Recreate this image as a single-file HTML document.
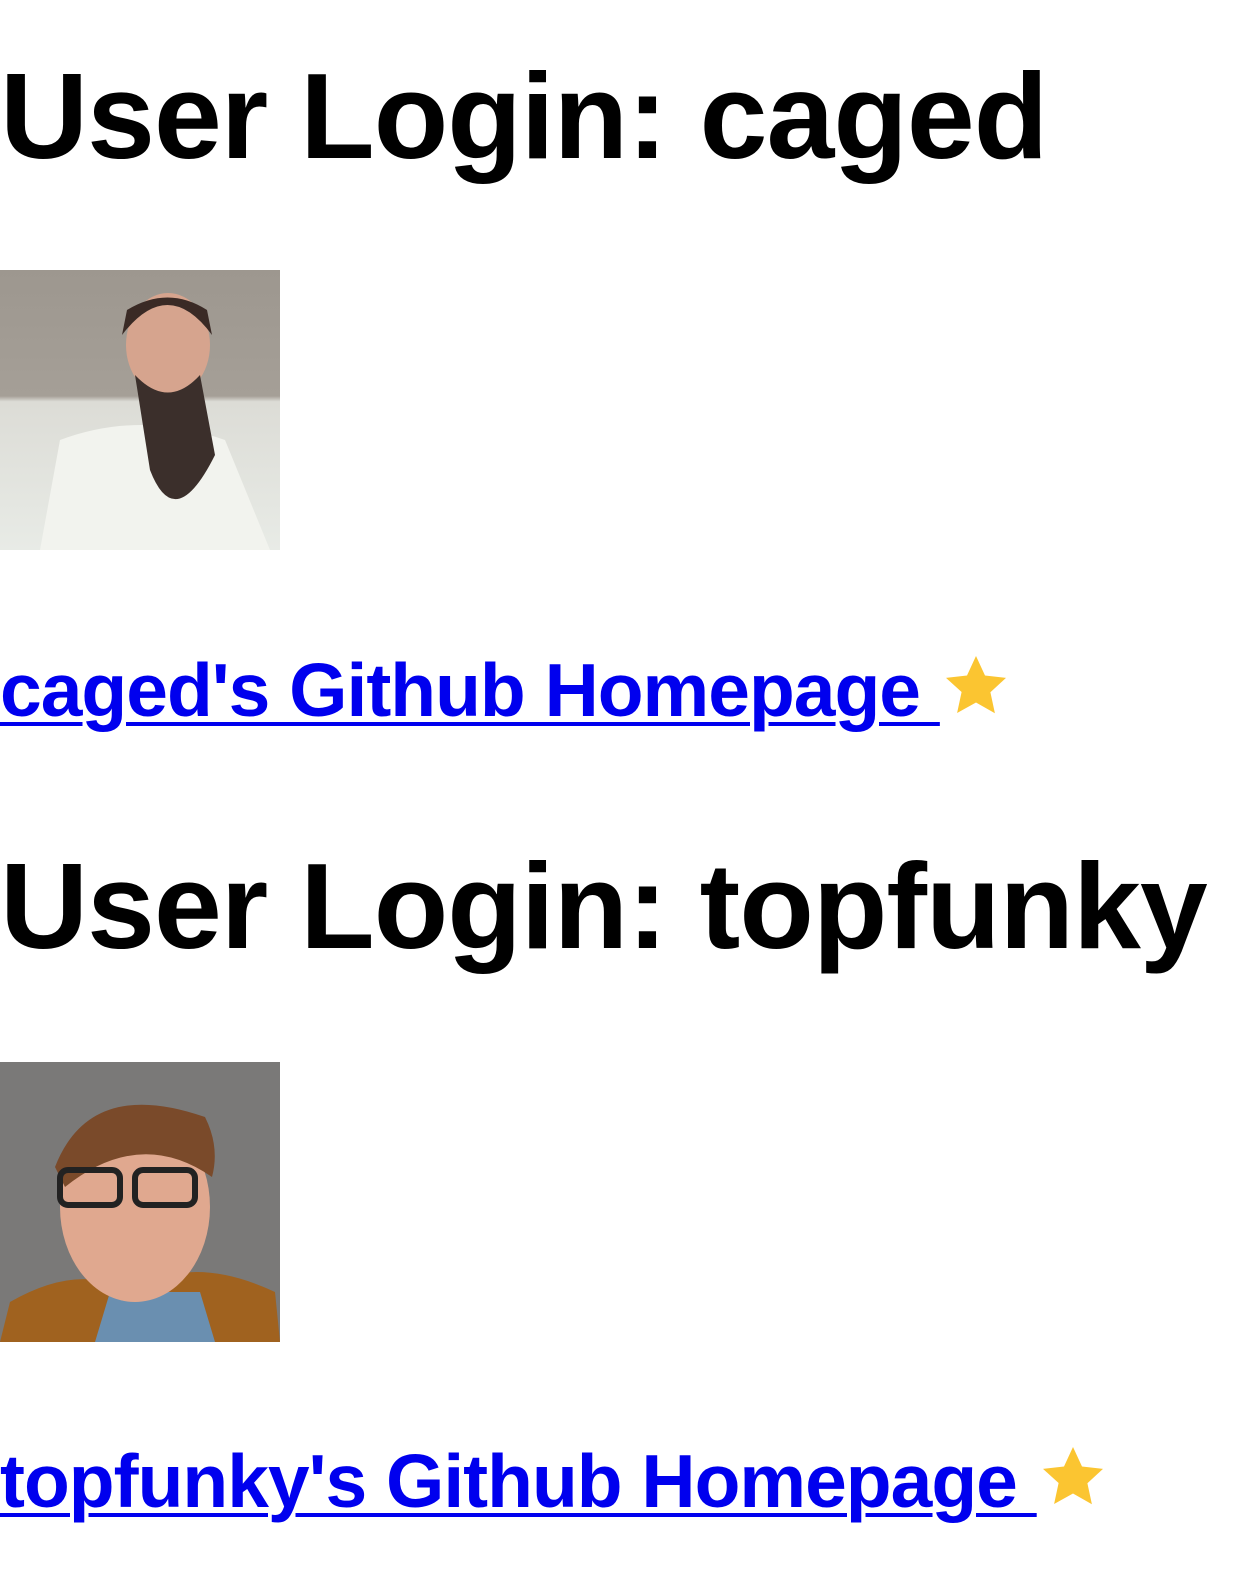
<!DOCTYPE html>
<html><head><meta charset="utf-8"><style>
html,body{margin:0;padding:0;background:#fff;width:1240px;height:1596px;overflow:hidden;position:relative}
.h{position:absolute;left:0;font-family:"Liberation Sans",sans-serif;font-weight:bold;line-height:1;white-space:nowrap;color:#000}
.h1{font-size:122px;letter-spacing:-1px}
.a{font-size:75px;color:#0000ee;text-decoration:underline;text-decoration-thickness:4px;text-underline-offset:6px;letter-spacing:-1px}
.img{position:absolute;left:0;width:280px;height:280px;overflow:hidden}
</style></head><body>
<div class="h h1" style="top:55px">User Login: caged</div>
<div class="img" style="top:270px;background:linear-gradient(#9d978f 0,#a59f97 45%,#dcdcd6 47%,#e8ebe6 100%)">
<svg width="280" height="280"><path d="M40 280 L60 170 Q140 140 225 170 L270 280Z" fill="#f2f3ee"/><ellipse cx="168" cy="75" rx="42" ry="52" fill="#d6a48e"/><path d="M122 65 Q168 5 212 65 L207 40 Q168 15 127 40Z" fill="#3a2a25"/><path d="M135 105 Q168 140 200 105 L215 185 Q175 265 150 200 Z" fill="#3b2f2b"/></svg></div>
<div class="h a" style="top:650px">caged's Github Homepage <svg width="72" height="72" viewBox="0 0 24 24" style="vertical-align:-6px"><path d="M12 2l3 6.5 7 .8-5.2 4.8 1.5 7L12 17.5 5.7 21l1.5-7L2 9.3l7-.8z" fill="#fbc531"/></svg></div>
<div class="h h1" style="top:845px">User Login: topfunky</div>
<div class="img" style="top:1062px;background:#7a7978">
<svg width="280" height="280"><path d="M0 280 L10 240 Q80 200 130 230 Q190 190 275 230 L280 280Z" fill="#a0621f"/><path d="M95 280 L110 230 L200 230 L215 280Z" fill="#6a8fb0"/><ellipse cx="135" cy="145" rx="75" ry="95" fill="#e0a88f"/><path d="M55 105 Q90 15 205 55 Q220 85 212 115 Q140 65 65 125Z" fill="#7a4a2a"/><rect x="60" y="108" width="60" height="35" rx="8" fill="none" stroke="#222" stroke-width="6"/><rect x="135" y="108" width="60" height="35" rx="8" fill="none" stroke="#222" stroke-width="6"/></svg></div>
<div class="h a" style="top:1441px">topfunky's Github Homepage <svg width="72" height="72" viewBox="0 0 24 24" style="vertical-align:-6px"><path d="M12 2l3 6.5 7 .8-5.2 4.8 1.5 7L12 17.5 5.7 21l1.5-7L2 9.3l7-.8z" fill="#fbc531"/></svg></div>
</body></html>
